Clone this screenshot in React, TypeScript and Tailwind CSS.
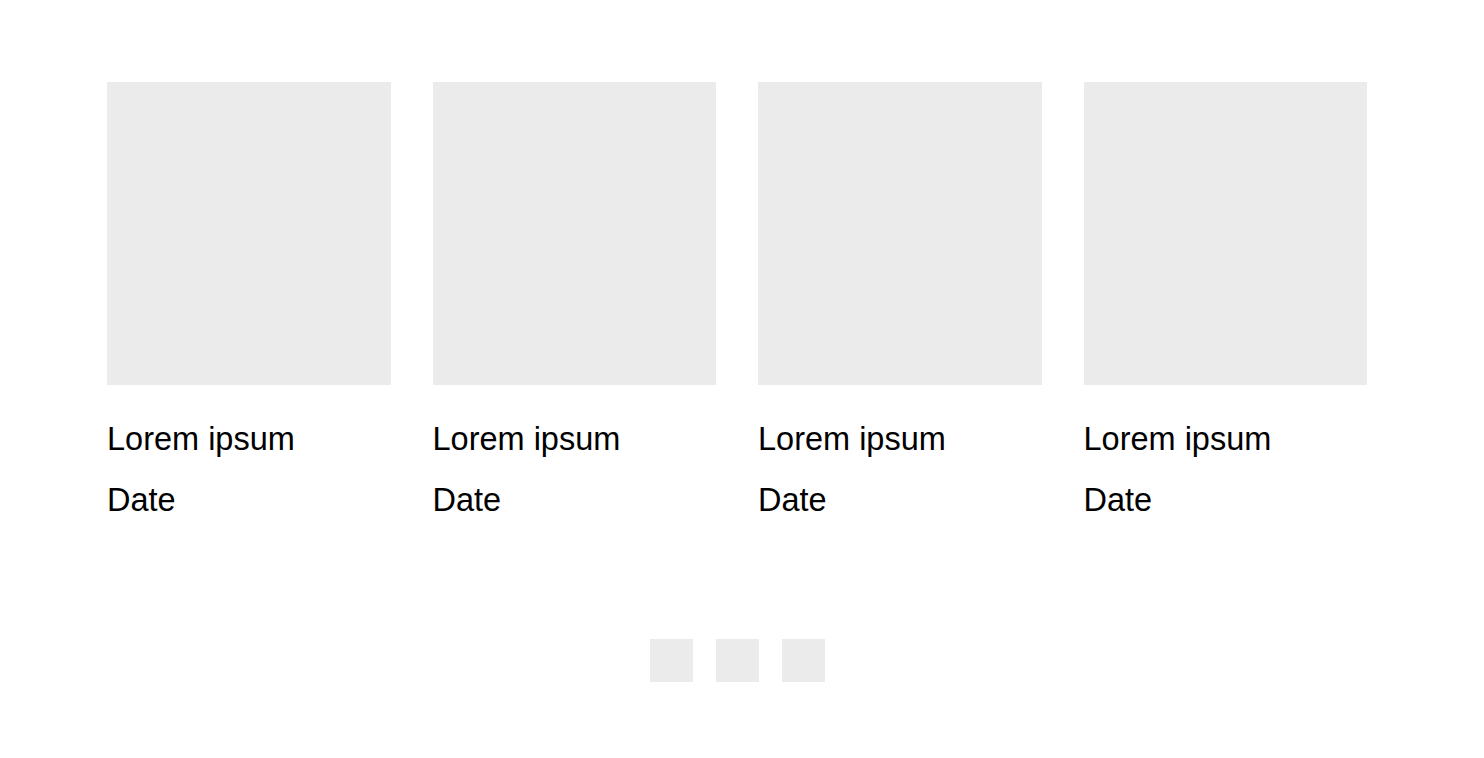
const POSTS = [
  { id: 1, title: "Lorem ipsum", date: "Date" },
  { id: 2, title: "Lorem ipsum", date: "Date" },
  { id: 3, title: "Lorem ipsum", date: "Date" },
  { id: 4, title: "Lorem ipsum", date: "Date" },
];

function PostCard({ title, date }: { title: string; date: string }) {
  return (
    <div className="flex flex-col">
      <div className="h-[303px] w-full bg-[#ebebeb]" />
      <div className="mt-6 text-[32.5px] leading-[61px] text-black">
        <p>{title}</p>
        <p>{date}</p>
      </div>
    </div>
  );
}

export default function App() {
  return (
    <div className="min-h-[758px] w-[1484px] bg-white pt-[82px] font-['Liberation_Sans',Arial,sans-serif]">
      <div className="ml-[107px] grid w-[1260px] grid-cols-4 gap-x-[42px]">
        {POSTS.map((post) => (
          <PostCard key={post.id} title={post.title} date={post.date} />
        ))}
      </div>
      <div className="mt-[108px] flex w-[1474px] justify-center gap-[23px]">
        <button className="h-[43px] w-[43px] bg-[#ebebeb]" aria-label="Page 1" />
        <button className="h-[43px] w-[43px] bg-[#ebebeb]" aria-label="Page 2" />
        <button className="h-[43px] w-[43px] bg-[#ebebeb]" aria-label="Page 3" />
      </div>
    </div>
  );
}
